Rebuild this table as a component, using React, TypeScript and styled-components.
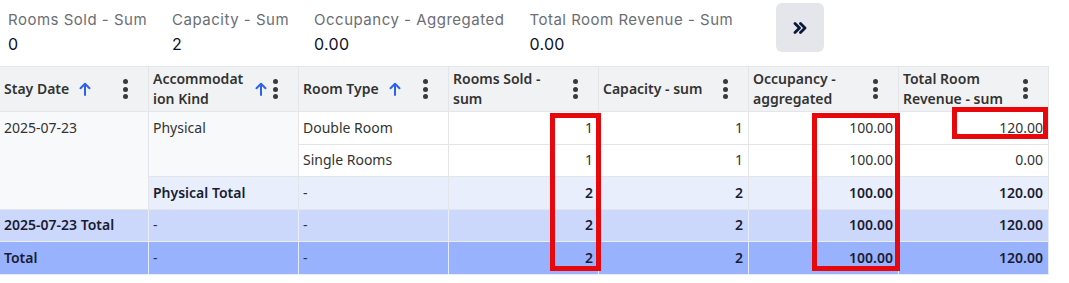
import React from "react";
import styled, { createGlobalStyle } from "styled-components";

const Global = createGlobalStyle`
  html, body { margin: 0; padding: 0; background: #fff; }
  body { font-family: "Noto Sans", "Open Sans", sans-serif; }
`;

const Page = styled.div`
  position: relative;
  width: 1069px;
  height: 283px;
  overflow: hidden;
`;

const Summary = styled.div`
  display: flex;
  align-items: flex-start;
  gap: 25px;
  padding: 3px 0 0 8px;
  height: 66px;
  box-sizing: border-box;
`;

const Stat = styled.div`
  display: flex;
  flex-direction: column;
  gap: 2px;
  padding-top: 7px;
`;

const StatLabel = styled.div`
  font-family: "Inter", "Lato", sans-serif;
  font-size: 15px;
  line-height: 20px;
  color: #6b6e75;
  letter-spacing: 0.5px;
`;

const StatValue = styled.div`
  font-family: "Inter", "Lato", sans-serif;
  font-size: 16px;
  line-height: 24px;
  color: #0d1026;
  letter-spacing: 0.3px;
`;

const ExpandButton = styled.button`
  margin-left: 18px;
  width: 48px;
  height: 49px;
  border: none;
  border-radius: 6px;
  background: #e4e6eb;
  display: flex;
  align-items: center;
  justify-content: center;
  padding: 0;
`;

const Table = styled.table`
  border-collapse: collapse;
  table-layout: fixed;
  width: 1048px;
  margin-left: -1px;
  font-size: 14px;
  color: #333;
`;

const HeadCell = styled.th`
  height: 44px;
  padding: 0 0 0 4px;
  background: #f1f2f4;
  border: 1px solid #e3e5e8;
  text-align: left;
  font-weight: 600;
  vertical-align: middle;
`;

const HeadInner = styled.div`
  display: flex;
  align-items: center;
  padding-right: 20px;
  line-height: 20px;
`;

const HeadText = styled.span<{ $w?: number; $break?: boolean }>`
  ${(p) => (p.$w ? `width: ${p.$w}px;` : "")}
  word-break: ${(p) => (p.$break ? "break-all" : "normal")};
  color: #333;
`;

const Sort = styled.span`
  display: inline-flex;
  margin-left: 10px;
  color: #2b63f0;
`;

const Spacer = styled.span`
  flex: 1;
`;

const Kebab = styled.span`
  display: inline-flex;
  flex-direction: column;
  gap: 2.5px;
  & > i {
    display: block;
    width: 5px;
    height: 5px;
    border-radius: 50%;
    background: #3a3a3a;
  }
`;

type Tone = "plain" | "group" | "sub" | "date" | "grand";

const bg: Record<Tone, string> = {
  plain: "#ffffff",
  group: "#f8f9fa",
  sub: "#e8eefc",
  date: "#cbd8fc",
  grand: "#99b2fd",
};

const border: Record<Tone, string> = {
  plain: "#e3e5e8",
  group: "#e3e5e8",
  sub: "#e3e5e8",
  date: "#e9edf8",
  grand: "#e6ebfa",
};

const Cell = styled.td<{ $tone: Tone; $num?: boolean; $bold?: boolean; $top?: boolean }>`
  height: 31.5px;
  padding: ${(p) => (p.$top ? "6px 5px 0 4px" : "0 5px 0 4px")};
  background: ${(p) => bg[p.$tone]};
  border: 1px solid ${(p) => border[p.$tone]};
  text-align: ${(p) => (p.$num ? "right" : "left")};
  vertical-align: ${(p) => (p.$top ? "top" : "middle")};
  font-weight: ${(p) => (p.$bold ? 600 : 400)};
  color: ${(p) => (p.$bold ? "#1a1c33" : "#333")};
  line-height: 20px;
  white-space: nowrap;
`;

const Mark = styled.div<{ $x: number; $y: number; $w: number; $h: number }>`
  position: absolute;
  left: ${(p) => p.$x}px;
  top: ${(p) => p.$y}px;
  width: ${(p) => p.$w}px;
  height: ${(p) => p.$h}px;
  border: 5px solid #e8070b;
  box-sizing: border-box;
  pointer-events: none;
`;

const Arrow = () => (
  <svg width="12" height="14" viewBox="0 0 12 14" fill="none">
    <path d="M6 13V2M1.5 6.2L6 1.7l4.5 4.5" stroke="currentColor" strokeWidth="2" strokeLinecap="round" strokeLinejoin="round" />
  </svg>
);

const Dots = () => (
  <Kebab>
    <i />
    <i />
    <i />
  </Kebab>
);

const Chevrons = () => (
  <svg width="14" height="12" viewBox="0 0 14 12" fill="none">
    <path d="M2 1.5l4.5 4.5L2 10.5M7.5 1.5L12 6l-4.5 4.5" stroke="#0b1739" strokeWidth="2.8" strokeLinecap="round" strokeLinejoin="round" />
  </svg>
);

const stats = [
  { label: "Rooms Sold - Sum", value: "0" },
  { label: "Capacity - Sum", value: "2" },
  { label: "Occupancy - Aggregated", value: "0.00" },
  { label: "Total Room Revenue - Sum", value: "0.00" },
];

const headers: { text: string; sort?: boolean; w?: number; brk?: boolean }[] = [
  { text: "Stay Date", sort: true },
  { text: "Accommodation Kind", sort: true, w: 92, brk: true },
  { text: "Room Type", sort: true },
  { text: "Rooms Sold - sum", w: 100 },
  { text: "Capacity - sum" },
  { text: "Occupancy - aggregated", w: 100 },
  { text: "Total Room Revenue - sum", w: 100 },
];

export default function App() {
  return (
    <Page>
      <Global />
      <Summary>
        {stats.map((s) => (
          <Stat key={s.label}>
            <StatLabel>{s.label}</StatLabel>
            <StatValue>{s.value}</StatValue>
          </Stat>
        ))}
        <ExpandButton aria-label="expand">
          <Chevrons />
        </ExpandButton>
      </Summary>
      <Table>
        <colgroup>
          <col style={{ width: 149 }} />
          <col style={{ width: 150 }} />
          <col style={{ width: 150 }} />
          <col style={{ width: 150 }} />
          <col style={{ width: 150 }} />
          <col style={{ width: 150 }} />
          <col style={{ width: 150 }} />
        </colgroup>
        <thead>
          <tr>
            {headers.map((h) => (
              <HeadCell key={h.text}>
                <HeadInner>
                  <HeadText $w={h.w} $break={h.brk}>{h.text}</HeadText>
                  {h.sort && (
                    <Sort>
                      <Arrow />
                    </Sort>
                  )}
                  <Spacer />
                  <Dots />
                </HeadInner>
              </HeadCell>
            ))}
          </tr>
        </thead>
        <tbody>
          <tr>
            <Cell $tone="group" $top rowSpan={3}>2025-07-23</Cell>
            <Cell $tone="group" $top rowSpan={2}>Physical</Cell>
            <Cell $tone="plain">Double Room</Cell>
            <Cell $tone="plain" $num>1</Cell>
            <Cell $tone="plain" $num>1</Cell>
            <Cell $tone="plain" $num>100.00</Cell>
            <Cell $tone="plain" $num>120.00</Cell>
          </tr>
          <tr>
            <Cell $tone="plain">Single Rooms</Cell>
            <Cell $tone="plain" $num>1</Cell>
            <Cell $tone="plain" $num>1</Cell>
            <Cell $tone="plain" $num>100.00</Cell>
            <Cell $tone="plain" $num>0.00</Cell>
          </tr>
          <tr>
            <Cell $tone="sub" $bold>Physical Total</Cell>
            <Cell $tone="sub">-</Cell>
            <Cell $tone="sub" $num $bold>2</Cell>
            <Cell $tone="sub" $num $bold>2</Cell>
            <Cell $tone="sub" $num $bold>100.00</Cell>
            <Cell $tone="sub" $num $bold>120.00</Cell>
          </tr>
          <tr>
            <Cell $tone="date" $bold>2025-07-23 Total</Cell>
            <Cell $tone="date">-</Cell>
            <Cell $tone="date">-</Cell>
            <Cell $tone="date" $num $bold>2</Cell>
            <Cell $tone="date" $num $bold>2</Cell>
            <Cell $tone="date" $num $bold>100.00</Cell>
            <Cell $tone="date" $num $bold>120.00</Cell>
          </tr>
          <tr>
            <Cell $tone="grand" $bold>Total</Cell>
            <Cell $tone="grand">-</Cell>
            <Cell $tone="grand">-</Cell>
            <Cell $tone="grand" $num $bold>2</Cell>
            <Cell $tone="grand" $num $bold>2</Cell>
            <Cell $tone="grand" $num $bold>100.00</Cell>
            <Cell $tone="grand" $num $bold>120.00</Cell>
          </tr>
        </tbody>
      </Table>
      <Mark $x={550} $y={113} $w={51} $h={158} />
      <Mark $x={812} $y={113} $w={88} $h={158} />
      <Mark $x={952} $y={107} $w={96} $h={32} />
    </Page>
  );
}
